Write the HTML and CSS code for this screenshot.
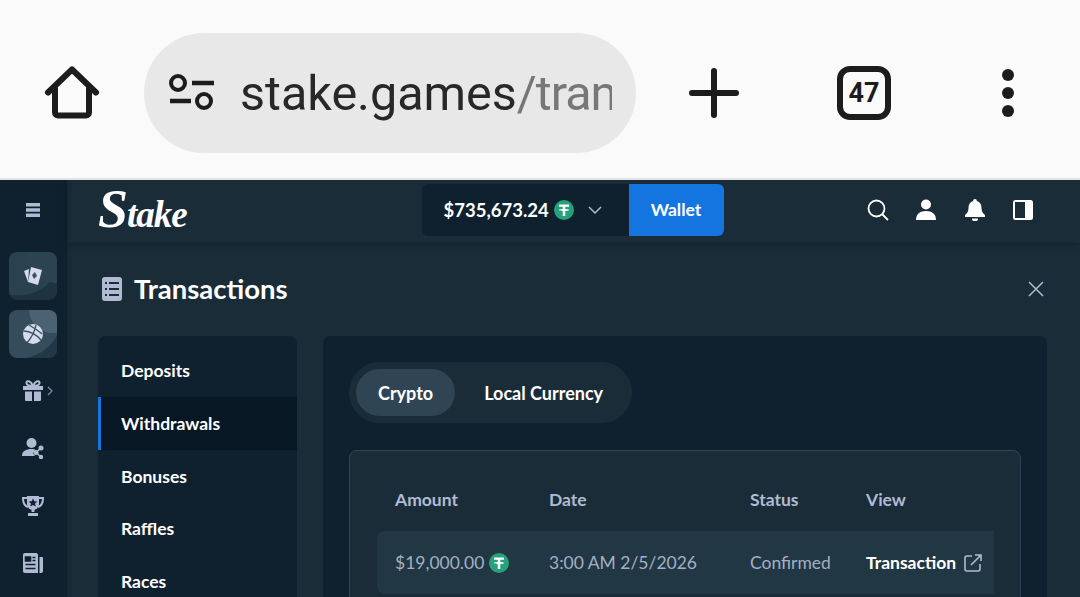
FILE: index.html
```html
<!DOCTYPE html>
<html lang="en">
<head>
    <meta charset="UTF-8">
    <meta name="viewport" content="width=device-width, initial-scale=1.0">
    <title>Stake - Transactions</title>
    <link rel="stylesheet" href="styles.css">
</head>
<body>
    <div class="browser-bar">
        <div class="bar-cell home-cell">
            <svg width="56" height="56" viewBox="0 0 56 56"><path d="M4 28 28 5l24 23M11 24v24a3 3 0 0 0 3 3h28a3 3 0 0 0 3-3V24" transform="translate(0 -.5)" fill="none" stroke="#1c1c1c" stroke-width="6" stroke-linejoin="round" stroke-linecap="round"/></svg>
        </div>
        <div class="address-pill">
            <svg class="tune-icon" width="46" height="40" viewBox="0 0 46 40"><circle cx="10" cy="10" r="7" fill="none" stroke="#1c1c1c" stroke-width="4"/><path d="M24 10h22M2 28h21" stroke="#1c1c1c" stroke-width="4.5"/><circle cx="36" cy="28" r="7" fill="none" stroke="#1c1c1c" stroke-width="4"/></svg>
            <div class="url"><span class="url-host">stake.games</span><span class="url-path">/tran</span></div>
        </div>
        <div class="bar-cell plus-cell">
            <svg width="50" height="50" viewBox="0 0 50 50"><path d="M25 3v44M3 25h44" stroke="#1c1c1c" stroke-width="6" stroke-linecap="round"/></svg>
        </div>
        <div class="bar-cell tabs-cell"><span class="tab-count">47</span></div>
        <div class="bar-cell dots-cell"><i></i><i></i><i></i></div>
    </div>

    <div class="app">
        <aside class="rail">
            <div class="rail-top">
                <svg width="16" height="16" viewBox="0 0 16 16"><path d="M1 1h14v3.600H1zM1 6.200h14v3.600H1zM1 11.400h14V15H1z" fill="#b1bad3"/></svg>
            </div>
            <div class="tile tile-casino">
                <svg width="24" height="24" viewBox="0 0 24 24"><path d="M3 7l5-2-1 13z" fill="#d5dceb"/><path d="M10 3l11 3-4 15-10-3z" fill="#d5dceb"/><path d="M14 8l2 4-3 3-2-4z" fill="#3a5262"/></svg>
            </div>
            <div class="tile tile-sports">
                <svg width="24" height="24" viewBox="0 0 24 24"><circle cx="12" cy="12" r="10" fill="#d5dceb"/><path d="M3 9c6 0 13 4 17 9M8 3c5 3 11 7 13 9M15 3c-1 6-5 13-9 18" fill="none" stroke="#3a5262" stroke-width="1.400"/></svg>
            </div>
            <div class="rail-item">
                <svg width="22" height="22" viewBox="0 0 22 22"><path d="M1 6h20v4H1zM3 11.500h7V21H4a1 1 0 0 1-1-1zM12 11.500h7V20a1 1 0 0 1-1 1h-6z" fill="#b1bad3"/><path d="M11 6C9 1 5 0 4.500 2.500S7 6 11 6c4 0 7-1 6.500-3.500S13 1 11 6z" fill="none" stroke="#b1bad3" stroke-width="2"/></svg>
                <svg class="rail-caret" width="6" height="10" viewBox="0 0 6 10"><path d="M1 1l4 4-4 4" fill="none" stroke="#7f8ea3" stroke-width="1.200"/></svg>
            </div>
            <div class="rail-item">
                <svg width="22" height="22" viewBox="0 0 22 22"><circle cx="9.500" cy="6" r="5" fill="#b1bad3"/><path d="M0 19c0-5 4-7 9.500-7 2 0 3 .3 4 .7L11 16l2 3z" fill="#b1bad3"/><circle cx="19" cy="11" r="2.500" fill="#b1bad3"/><circle cx="14" cy="15.500" r="2.500" fill="#b1bad3"/><circle cx="19" cy="20" r="2.200" fill="#b1bad3"/><path d="M19 11l-5 4.500 5 4.500" fill="none" stroke="#b1bad3" stroke-width="1.500"/></svg>
            </div>
            <div class="rail-item">
                <svg width="22" height="22" viewBox="0 0 22 22"><path d="M5 1h12v8a6 6 0 0 1-12 0z" fill="#b1bad3"/><path d="M5 3H1c0 5 1.500 8 5 9M17 3h4c0 5-1.500 8-5 9" fill="none" stroke="#b1bad3" stroke-width="2"/><path d="M9.500 14h3v3h-3zM6 18h10v3H6z" fill="#b1bad3"/><path d="M11 3.500l1.300 2.800 3 .3-2.200 2 .6 3-2.700-1.500-2.700 1.500.6-3-2.200-2 3-.3z" fill="#0f212e"/></svg>
            </div>
            <div class="rail-item">
                <svg width="22" height="22" viewBox="0 0 22 22"><path d="M1 3a2 2 0 0 1 2-2h11a2 2 0 0 1 2 2v18H3a2 2 0 0 1-2-2z" fill="#b1bad3"/><path d="M17.500 5H20a1 1 0 0 1 1 1v13a2 2 0 0 1-2 2h-1.500z" fill="#b1bad3"/><path d="M3.500 5h5v4h-5zM10.500 5.500h3M10.500 8.500h3M3.500 12.500h10M3.500 16.500h10" stroke="#0f212e" stroke-width="1.600" fill="#0f212e"/></svg>
            </div>
        </aside>

        <div class="main">
            <header class="topbar">
                <div class="logo"><span class="logo-cap">S</span>take</div>
                <div class="balance-group">
                    <div class="balance">
                        <span class="balance-amount">$735,673.24</span>
                        <svg class="tether" width="20" height="20" viewBox="0 0 20 20"><circle cx="10" cy="10" r="10" fill="#26a17b"/><path d="M5 4.500h10v2.300h-3.700V9c2.200.1 3.800.5 3.800 1s-1.600.9-3.800 1v5H8.700v-5C6.500 10.900 4.900 10.500 4.900 10s1.600-.9 3.800-1V6.800H5z" fill="#fff"/></svg>
                        <svg class="chevron" width="14" height="14" viewBox="0 0 14 14"><path d="M1 4l6 6 6-6" fill="none" stroke="#b1bad3" stroke-width="1.500"/></svg>
                    </div>
                    <div class="wallet-btn">Wallet</div>
                </div>
                <div class="top-icons">
                    <svg width="22" height="22" viewBox="0 0 22 22"><circle cx="9.500" cy="9.500" r="8" fill="none" stroke="#fff" stroke-width="1.800"/><path d="M15 15l6 6" stroke="#fff" stroke-width="1.800"/></svg>
                    <svg width="22" height="22" viewBox="0 0 22 22"><circle cx="11" cy="5.500" r="5" fill="#fff"/><path d="M1 21c0-6 4-9 10-9s10 3 10 9z" fill="#fff"/></svg>
                    <svg width="22" height="22" viewBox="0 0 22 22"><path d="M11 0a1.800 1.800 0 0 1 1.800 2C16 2.800 17.500 5.500 17.500 9c0 3 1 5 3.500 7v2H1v-2c2.500-2 3.500-4 3.500-7 0-3.500 1.500-6.200 4.700-7A1.800 1.800 0 0 1 11 0zM8 19.500h6a3 3 0 0 1-6 0z" fill="#fff"/></svg>
                    <svg width="22" height="22" viewBox="0 0 22 22"><rect x="1" y="1" width="20" height="20" rx="2.500" fill="#fff"/><rect x="3" y="3" width="10" height="16" fill="#1a2c38"/></svg>
                </div>
            </header>

            <div class="page">
                <div class="page-title">
                    <svg width="20" height="24" viewBox="0 0 20 24"><rect width="20" height="24" rx="3" fill="#b1bad3"/><path d="M3 6h2M7 6h10M3 12h2M7 12h10M3 18h2M7 18h10" stroke="#1a2c38" stroke-width="2"/></svg>
                    <h1>Transactions</h1>
                    <svg class="close-icon" width="16" height="16" viewBox="0 0 16 16"><path d="M1 1l14 14M15 1L1 15" stroke="#b1bad3" stroke-width="1.500"/></svg>
                </div>
                <div class="columns">
                    <nav class="side-nav">
                        <a>Deposits</a>
                        <a class="active">Withdrawals</a>
                        <a>Bonuses</a>
                        <a>Raffles</a>
                        <a>Races</a>
                    </nav>
                    <section class="content">
                        <div class="tabs">
                            <span class="tab tab-on">Crypto</span>
                            <span class="tab">Local Currency</span>
                        </div>
                        <div class="table-card">
                            <div class="table-row table-head">
                                <span>Amount</span>
                                <span>Date</span>
                                <span>Status</span>
                                <span>View</span>
                            </div>
                            <div class="table-row table-body">
                                <span class="amount">$19,000.00
                                    <svg width="20" height="20" viewBox="0 0 20 20"><circle cx="10" cy="10" r="10" fill="#26a17b"/><path d="M5 4.500h10v2.300h-3.700V9c2.200.1 3.800.5 3.800 1s-1.600.9-3.800 1v5H8.700v-5C6.500 10.900 4.900 10.500 4.900 10s1.600-.9 3.800-1V6.800H5z" fill="#fff"/></svg>
                                </span>
                                <span>3:00 AM 2/5/2026</span>
                                <span>Confirmed</span>
                                <span class="tx-link">Transaction
                                    <svg width="18" height="18" viewBox="0 0 18 18"><path d="M8 2H3a2 2 0 0 0-2 2v11a2 2 0 0 0 2 2h11a2 2 0 0 0 2-2v-5M7 11l10-10M11 1h6v6" fill="none" stroke="#b1bad3" stroke-width="1.600"/></svg>
                                </span>
                            </div>
                        </div>
                    </section>
                </div>
            </div>
        </div>
    </div>
</body>
</html>
```

FILE: styles.css
```css
html, body {
    margin: 0;
    padding: 0;
    width: 1080px;
    height: 597px;
    overflow: hidden;
}

body {
    font-family: 'Lato', 'Open Sans', sans-serif;
    background-color: #1a2c38;
    color: #ffffff;
}

.browser-bar {
    display: flex;
    align-items: center;
    height: 180px;
    padding-top: 8px;
    box-sizing: border-box;
    background-color: #fafafa;
    border-bottom: 2px solid #e1e3e4;
}

.bar-cell {
    display: flex;
    align-items: center;
    justify-content: center;
}

.home-cell {
    width: 144px;
}

.address-pill {
    display: flex;
    align-items: center;
    width: 492px;
    height: 120px;
    padding: 0 24px;
    box-sizing: border-box;
    border-radius: 60px;
    background-color: #e8e8e8;
    flex-shrink: 0;
}

.tune-icon {
    flex-shrink: 0;
    margin-right: 26px;
}

.url {
    font-family: 'Roboto', sans-serif;
    font-size: 48.500px;
    white-space: nowrap;
    overflow: hidden;
    flex: 1;
}

.url-host {
    color: #282828;
}

.url-path {
    color: #777777;
    letter-spacing: -1px;
}

.plus-cell {
    width: 156px;
}

.tabs-cell {
    width: 144px;
}

.tab-count {
    display: block;
    width: 54px;
    height: 54px;
    line-height: 42px;
    box-sizing: border-box;
    border: 6px solid #1c1c1c;
    border-radius: 13px;
    text-align: center;
    font-family: 'Roboto', sans-serif;
    font-weight: 700;
    font-size: 27px;
    color: #1c1c1c;
}

.dots-cell {
    flex-direction: column;
    gap: 6px;
    width: 144px;
}

.dots-cell i {
    display: block;
    width: 12px;
    height: 12px;
    border-radius: 50%;
    background-color: #1c1c1c;
}

.app {
    display: flex;
    height: 417px;
    overflow: hidden;
}

.rail {
    display: flex;
    flex-direction: column;
    align-items: center;
    width: 67px;
    padding-right: 1px;
    box-sizing: border-box;
    flex-shrink: 0;
    background-color: #0f212e;
    box-shadow: 0 0 6px rgba(0, 0, 0, 0.2);
}

.rail-top {
    display: flex;
    align-items: center;
    justify-content: center;
    height: 60px;
    width: 100%;
    margin-bottom: 12px;
}

.tile {
    display: flex;
    align-items: center;
    justify-content: center;
    width: 48px;
    height: 48px;
    border-radius: 8px;
}

.tile-casino {
    margin-bottom: 10px;
    background: radial-gradient(circle at 100% 0%, #2c4352 45%, rgba(0, 0, 0, 0) 46%), radial-gradient(circle at 20% 0%, #2a4150 70%, #1e3240 71%);
}

.tile-sports {
    margin-bottom: 4px;
    background: radial-gradient(circle at 90% 0%, #4a6272 35%, rgba(0, 0, 0, 0) 36%), radial-gradient(circle at 20% 10%, #344c5c 75%, #233846 76%);
}

.rail-item {
    position: relative;
    display: flex;
    align-items: center;
    justify-content: center;
    height: 57.500px;
    width: 100%;
}

.rail-caret {
    position: absolute;
    left: 47px;
    top: 24px;
}

.main {
    flex: 1;
    display: flex;
    flex-direction: column;
    min-width: 0;
}

.topbar {
    display: grid;
    grid-template-columns: 1fr auto 1fr;
    align-items: center;
    height: 63px;
    padding: 0 46px 0 31px;
    flex-shrink: 0;
    box-shadow: 0 3px 6px rgba(0, 0, 0, 0.15);
}

.logo {
    font-family: 'Liberation Serif', serif;
    font-style: italic;
    font-weight: 700;
    font-size: 37px;
    letter-spacing: -1px;
    line-height: 50px;
    color: #ffffff;
}

.logo-cap {
    font-size: 54px;
    line-height: 50px;
}

.balance-group {
    display: flex;
    height: 52px;
    margin-top: -3px;
    margin-left: 13px;
    border-radius: 6px;
    overflow: hidden;
}

.balance {
    display: flex;
    align-items: center;
    width: 207px;
    padding-left: 22px;
    box-sizing: border-box;
    background-color: #0f212e;
}

.balance-amount {
    font-weight: 700;
    font-size: 18.500px;
}

.tether {
    margin-left: 5px;
}

.chevron {
    margin-left: 14px;
}

.wallet-btn {
    width: 95px;
    line-height: 52px;
    text-align: center;
    background-color: #1475e1;
    font-weight: 700;
    font-size: 17.500px;
}

.top-icons {
    display: flex;
    justify-content: flex-end;
    gap: 26.500px;
    margin-top: -3px;
}

.page {
    padding: 0 33px 0 31px;
}

.page-title {
    display: flex;
    align-items: center;
    height: 93px;
    padding: 0 0 2px 4px;
    box-sizing: border-box;
}

.page-title h1 {
    margin: 0 0 0 12px;
    font-size: 27.500px;
    font-weight: 700;
    flex: 1;
}

.close-icon {
    margin-right: 3px;
}

.columns {
    display: flex;
    gap: 26px;
}

.side-nav {
    width: 199px;
    height: 300px;
    padding-top: 8px;
    box-sizing: border-box;
    flex-shrink: 0;
    border-radius: 8px 8px 0 0;
    background-color: #0f212e;
    overflow: hidden;
}

.side-nav a {
    display: block;
    height: 52.800px;
    line-height: 54.500px;
    padding-left: 23px;
    font-weight: 700;
    font-size: 17.500px;
}

.side-nav a.active {
    padding-left: 20px;
    border-left: 3px solid #1475e1;
    background-color: #071824;
}

.content {
    flex: 1;
    min-width: 0;
    height: 300px;
    padding: 26px 26px 0;
    box-sizing: border-box;
    border-radius: 8px 8px 0 0;
    background-color: #0f212e;
}

.tabs {
    display: flex;
    gap: 7px;
    height: 61px;
    width: 283px;
    padding: 7px;
    box-sizing: border-box;
    border-radius: 31px;
    background-color: #1a2c38;
}

.tab {
    display: block;
    height: 47px;
    padding: 0 22px;
    line-height: 49px;
    border-radius: 24px;
    font-weight: 700;
    font-size: 18px;
    white-space: nowrap;
}

.tab-on {
    background-color: #2f4553;
}

.table-card {
    margin-top: 27px;
    height: 200px;
    padding: 27px 26px 0 27px;
    border: 1px solid #2f4553;
    border-radius: 8px;
    background-color: #1a2c38;
}

.table-row {
    display: grid;
    grid-template-columns: 154px 201px 116px 1fr;
    align-items: center;
    padding-left: 18px;
    font-size: 17.500px;
    color: #b1bad3;
}

.table-head {
    height: 53px;
    font-weight: 700;
    padding-bottom: 11px;
    box-sizing: border-box;
}

.table-body {
    height: 63px;
    border-radius: 8px 0 0 8px;
    background-color: #213743;
    color: #a4afc4;
}

.amount, .tx-link {
    display: flex;
    align-items: center;
    gap: 5px;
}

.tx-link {
    gap: 8px;
    color: #ffffff;
    font-weight: 700;
}
```
